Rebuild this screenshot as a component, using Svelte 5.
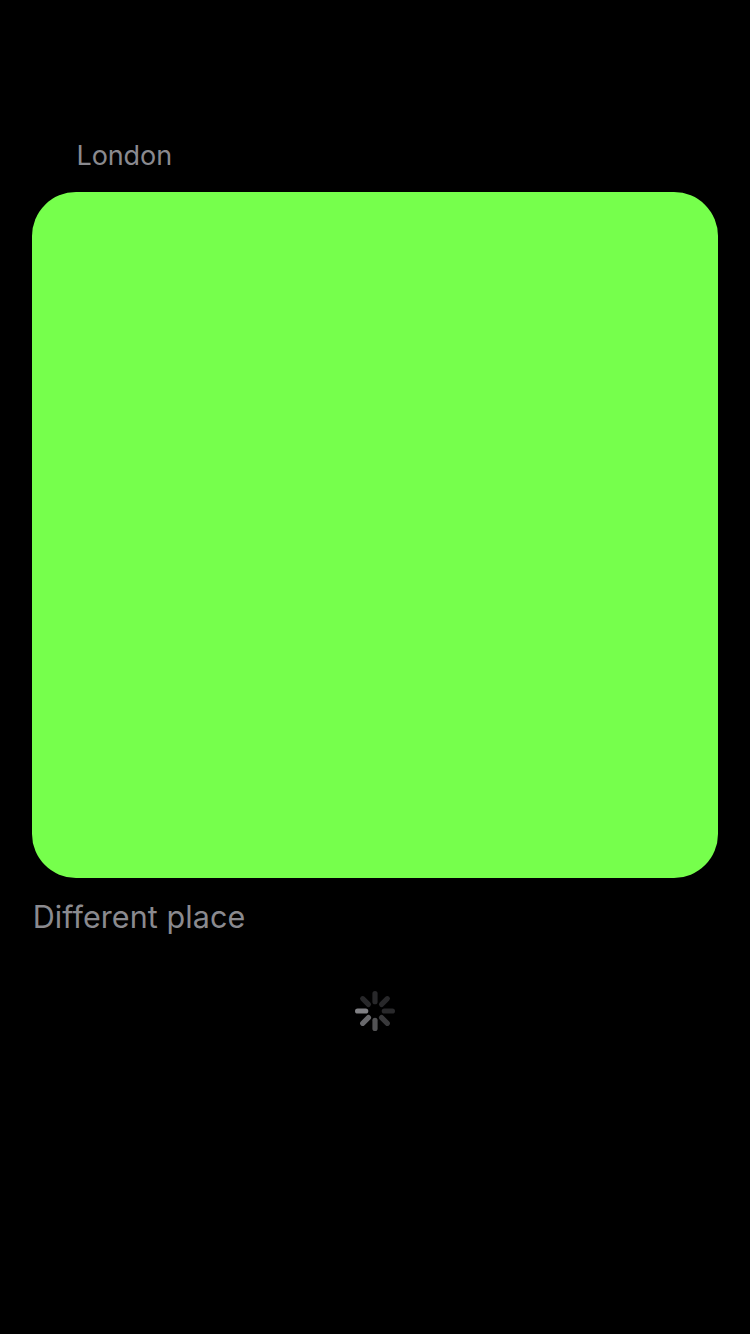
<script>
  const spokes = ['#28282a', '#28282a', '#29292b', '#39393b', '#525254', '#69696c', '#808084', '#28282a'];
</script>

<main>
  <h1>London</h1>
  <div class="card"></div>
  <p>Different place</p>
  <svg class="spinner" viewBox="-20 -20 40 40" width="40" height="40" role="img" aria-label="Loading">
    {#each spokes as color, i}
      <line x1="0" y1="-9.3" x2="0" y2="-17.4" stroke={color} stroke-width="5.2" stroke-linecap="round" transform={`rotate(${i * 45})`} />
    {/each}
  </svg>
</main>

<style>
  :global(body) {
    margin: 0;
    background: #000;
  }
  main {
    box-sizing: border-box;
    display: flex;
    flex-direction: column;
    min-height: 1334px;
    padding: 140px 32px 0;
    background: #000;
    color: #8a8a8f;
    font-family: Inter, 'Liberation Sans', sans-serif;
  }
  h1 {
    margin: 0 0 20px;
    padding-left: 44.5px;
    font-size: 27px;
    font-weight: 400;
    line-height: 32px;
    letter-spacing: -0.1px;
  }
  .card {
    height: 686px;
    border-radius: 44px;
    background: #76ff4c;
  }
  p {
    margin: 19px 0 0;
    padding-left: 0.7px;
    font-size: 30.5px;
    font-weight: 400;
    line-height: 40px;
    letter-spacing: 0.08px;
    font-variant-ligatures: none;
  }
  .spinner {
    align-self: center;
    margin-top: 54px;
  }
</style>
